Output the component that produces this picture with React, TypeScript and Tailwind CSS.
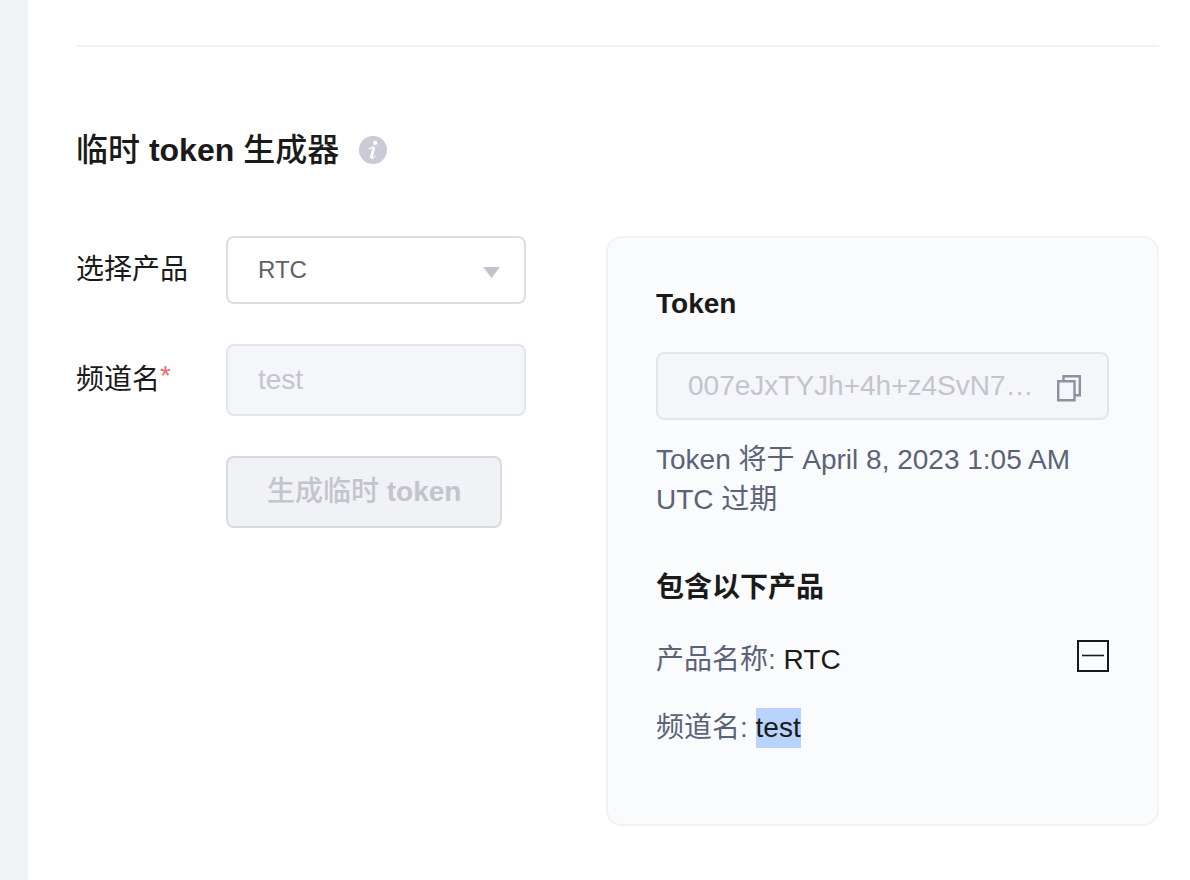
import React, { useState } from 'react';

const InfoIcon = () => (
  <svg width="28" height="28" viewBox="0 0 28 28" aria-hidden="true">
    <circle cx="14" cy="14" r="14" fill="#cbcbd7" />
    <circle cx="16.2" cy="6.900" r="2.100" fill="#fff" />
    <path
      d="M10.200 12.800c1.200-.7 2.600-1.500 4-1.600M12.200 20.800c-.2 1.400.2 1.800 1.200 1.400.9-.3 1.700-1 2.500-1.900"
      fill="none"
      stroke="#fff"
      strokeWidth="1.200"
      strokeLinecap="round"
    />
    <path d="M14.700 12 12.500 21" stroke="#fff" strokeWidth="2.800" strokeLinecap="round" />
  </svg>
);

const CopyIcon = () => (
  <svg width="26" height="28" viewBox="0 0 26 28" fill="none" stroke="#8f8f9f" strokeWidth="2.400" aria-hidden="true">
    <path d="M7.500 7V2.200h16.300v19h-5" />
    <path d="M2.200 7.300h16.300v19H2.200z" />
  </svg>
);

const App = () => {
  const [product, setProduct] = useState('RTC');
  const [open, setOpen] = useState(true);

  return (
    <div className="flex min-h-screen bg-white font-['Liberation_Sans','Noto_Sans_CJK_SC',sans-serif] text-[28px] leading-10 text-[#1a1a1a]">
      <div className="w-7 shrink-0 bg-[#f1f3f7]" />
      <main className="min-w-0 flex-1 pt-[45px] pr-[31px] pb-12 pl-12">
        <hr className="border-t-2 border-[#f1f2f6]" />

        <div className="mt-[79px] flex items-center gap-5">
          <h1 className="text-[32px] leading-12 font-medium">
            临时 <span className="font-bold">token</span> 生成器
          </h1>
          <InfoIcon />
        </div>

        <div className="mt-[62px] flex items-start gap-20">
          <form className="flex w-[450px] shrink-0 flex-col gap-10" onSubmit={(e) => e.preventDefault()}>
            <div className="flex items-center">
              <label htmlFor="product" className="w-[150px]">
                选择产品
              </label>
              <div className="relative flex-1">
                <select
                  id="product"
                  value={product}
                  onChange={(e) => setProduct(e.target.value)}
                  className="h-[68px] w-full appearance-none rounded-lg border-2 border-[#dcdde4] bg-white px-[30px] text-2xl text-[#606266]"
                >
                  <option value="RTC">RTC</option>
                </select>
                <svg
                  className="pointer-events-none absolute top-[31px] right-[26px]"
                  width="17"
                  height="11"
                  viewBox="0 0 17 11"
                  aria-hidden="true"
                >
                  <path d="M0 0h17L8.500 11z" fill="#c0c4cc" />
                </svg>
              </div>
            </div>

            <div className="flex items-center">
              <label htmlFor="channel" className="w-[150px]">
                频道名<span className="align-[4px] leading-none text-[#ec6a6a]">*</span>
              </label>
              <input
                id="channel"
                type="text"
                value="test"
                disabled
                className="h-[72px] min-w-0 flex-1 rounded-lg border-2 border-[#e3e5ec] bg-[#f5f6fa] px-[30px] text-[#c3c4cc]"
              />
            </div>

            <button
              type="submit"
              disabled
              className="ml-[150px] h-[72px] self-start rounded-lg border-2 border-[#d9dae0] bg-[#f1f2f6] px-[39px] font-medium text-[#c3c4cc]"
            >
              生成临时 <span className="font-bold">token</span>
            </button>
          </form>

          <section className="min-w-0 flex-1 rounded-2xl border-2 border-[#f1f2f6] bg-[#fafbfd] px-12 pt-[46px] pb-[76px]">
            <label htmlFor="token" className="block font-bold">
              Token
            </label>
            <div className="mt-7 flex h-[68px] items-center gap-4 rounded-lg border-2 border-[#e3e5ec] bg-[#f5f6fa] pr-[25px] pl-[30px]">
              <input
                id="token"
                type="text"
                value="007eJxTYJh+4h+z4SvN7…"
                disabled
                className="min-w-0 flex-1 text-ellipsis text-[#c3c4cc]"
              />
              <button type="button" aria-label="复制" className="mt-1 shrink-0">
                <CopyIcon />
              </button>
            </div>
            <p className="mt-5 text-[#5a6378]">Token 将于 April 8, 2023 1:05 AM UTC 过期</p>

            <h2 className="mt-12 font-bold">包含以下产品</h2>
            <div className="mt-8 flex items-start justify-between">
              <p>
                <span className="text-[#5a6378]">产品名称:</span> {product}
              </p>
              <button
                type="button"
                aria-label="收起"
                aria-expanded={open}
                onClick={() => setOpen(!open)}
                className="flex size-8 items-center justify-center border-2 border-[#1a1a1a]"
              >
                <svg width="24" height="4" viewBox="0 0 24 4" aria-hidden="true">
                  <path d="M1 1.500h22" stroke="#1a1a1a" strokeWidth="1.600" />
                </svg>
              </button>
            </div>
            {open && (
              <p className="mt-7">
                <span className="text-[#5a6378]">频道名:</span>{' '}
                <mark className="inline-block bg-[#b8d4fc] text-inherit">test</mark>
              </p>
            )}
          </section>
        </div>
      </main>
    </div>
  );
};

export default App;
